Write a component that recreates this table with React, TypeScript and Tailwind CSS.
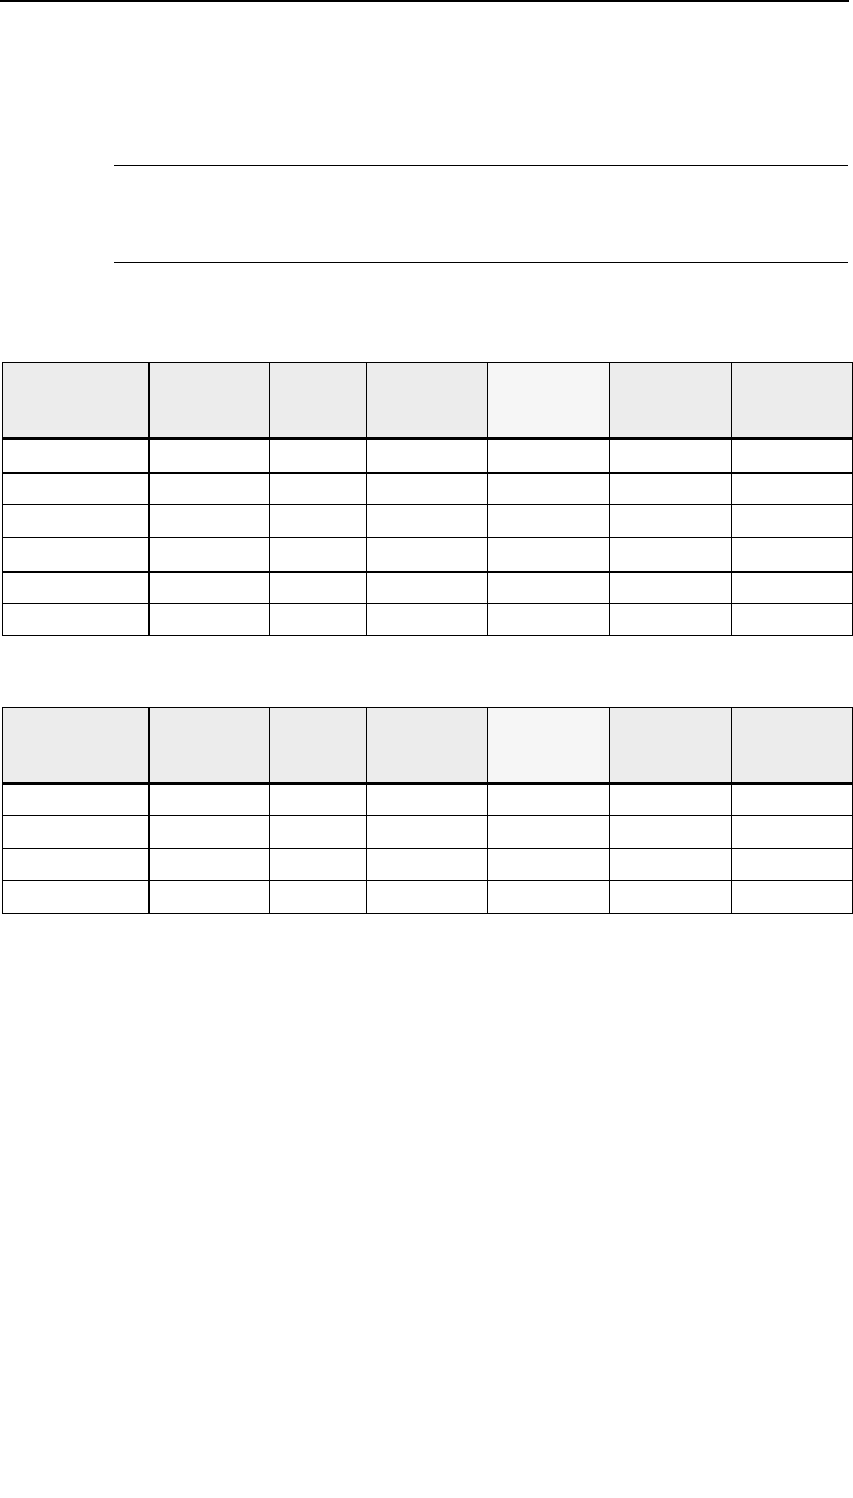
const widths = [146, 121, 97, 121, 122, 122, 121];

interface GridTableProps {
  rowHeights: number[];
  thickRows?: number[];
}

function GridTable({ rowHeights, thickRows = [] }: GridTableProps) {
  return (
    <table className="ml-[2px] w-[850px] table-fixed border-collapse">
      <colgroup>
        {widths.map((w, i) => (
          <col key={i} style={{ width: w }} />
        ))}
      </colgroup>
      <thead>
        <tr className="h-[76px]">
          {widths.map((_, i) => (
            <th
              key={i}
              className={
                'border-t border-b-[3px] border-black ' +
                (i === 0 ? 'border-l border-r-2 ' : 'border-r ') +
                (i === 4 ? 'bg-[#f6f6f6]' : 'bg-[#ececec]')
              }
            />
          ))}
        </tr>
      </thead>
      <tbody>
        {rowHeights.map((h, r) => (
          <tr key={r} style={{ height: h }}>
            {widths.map((_, i) => (
              <td
                key={i}
                className={
                  'border-black ' +
                  (thickRows.includes(r) ? 'border-b-2 ' : 'border-b ') +
                  (i === 0 ? 'border-l border-r-2' : 'border-r')
                }
              />
            ))}
          </tr>
        ))}
      </tbody>
    </table>
  );
}

export default function App() {
  return (
    <div className="w-[853px] min-h-[1498px] bg-white" style={{ fontFamily: '"Liberation Sans", Arial, sans-serif' }}>
      {/* page rule */}
      <div className="h-[2px] w-[849px] bg-black" />

      {/* ruled box */}
      <div className="ml-[114px] mt-[163px] h-[98px] w-[734px] border-y border-black" />

      <div className="mt-[99px]">
        <GridTable rowHeights={[34, 32, 33, 34, 32, 32]} thickRows={[0, 3]} />
      </div>

      <div className="mt-[71px]">
        <GridTable rowHeights={[32, 33, 32, 33]} />
      </div>
    </div>
  );
}
